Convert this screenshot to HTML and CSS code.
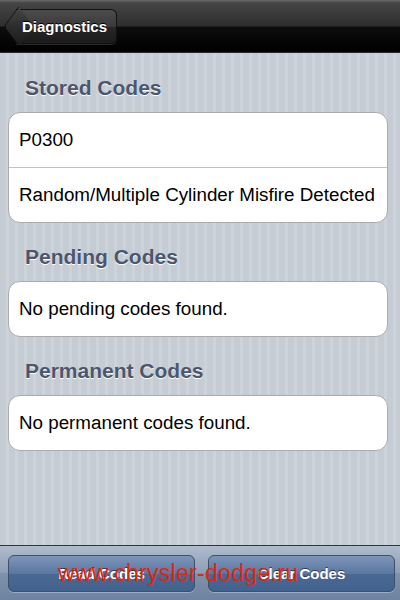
FILE: index.html
```html
<!DOCTYPE html>
<html lang="en">
<head>
  <meta charset="UTF-8">
  <meta name="viewport" content="width=device-width, initial-scale=1.0">
  <title>Diagnostics</title>
  <link rel="stylesheet" href="styles.css">
</head>
<body>
  <div class="app">
    <div class="navbar">
      <button class="back">Diagnostics</button>
    </div>
    <div class="content">
      <h2 class="section-title">Stored Codes</h2>
      <div class="group">
        <div class="cell">P0300</div>
        <div class="cell">Random/Multiple Cylinder Misfire Detected</div>
      </div>
      <h2 class="section-title">Pending Codes</h2>
      <div class="group">
        <div class="cell">No pending codes found.</div>
      </div>
      <h2 class="section-title">Permanent Codes</h2>
      <div class="group">
        <div class="cell">No permanent codes found.</div>
      </div>
    </div>
    <div class="toolbar">
      <button class="tool-btn">Read Codes</button>
      <button class="tool-btn">Clear Codes</button>
      <span class="watermark">www.chrysler-dodge.ru</span>
    </div>
  </div>
</body>
</html>
```

FILE: styles.css
```css
body {
  margin: 0;
  font-family: "Liberation Sans", Arial, sans-serif;
}
.app {
  width: 400px;
  height: 600px;
  display: flex;
  flex-direction: column;
  background: repeating-linear-gradient(90deg, #c5ccd4 0, #c5ccd4 6px, #ccd3da 6px, #ccd3da 9px);
}
.navbar {
  height: 53px;
  box-sizing: border-box;
  display: flex;
  align-items: center;
  padding-left: 6px;
  background: linear-gradient(#6a6a6a 0, #454545 3px, #2e2e2e 26px, #0d0d0d 27px, #000 52px);
  border-bottom: 1px solid #2a2a2a;
}
.back {
  position: relative;
  z-index: 0;
  isolation: isolate;
  height: 35px;
  margin-left: 10px;
  padding: 0 9px 0 6px;
  font-family: inherit;
  font-size: 15px;
  font-weight: bold;
  color: #fff;
  text-shadow: 0 -1px 0 #000;
  border: 1px solid #111;
  border-left: none;
  border-radius: 0 6px 6px 0;
  background: linear-gradient(#4c4c4c, #3a3a3a 50%, #262626 51%, #1c1c1c);
  box-shadow: 0 1px 0 rgba(255, 255, 255, 0.15);
}
.back::before {
  content: "";
  position: absolute;
  left: -10px;
  top: 4px;
  width: 24px;
  height: 24px;
  transform: rotate(45deg) skew(8deg, 8deg);
  background: linear-gradient(135deg, #474747, #2c2c2c 50%, #1c1c1c);
  border-left: 1px solid #111;
  border-bottom: 1px solid #111;
  border-radius: 0 0 0 4px;
  z-index: -1;
}
.content {
  flex: 1;
  padding: 24px 12px 0 8px;
}
.section-title {
  margin: 0 0 13px 17px;
  font-size: 21px;
  font-weight: bold;
  color: #4c566c;
  text-shadow: 0 1px 0 #fff;
  line-height: 22px;
}
.group {
  background: #fff;
  border: 1px solid #a9abae;
  border-radius: 12px;
  margin-bottom: 23px;
}
.cell {
  height: 54px;
  display: flex;
  align-items: center;
  padding-left: 10px;
  font-size: 18.8px;
  color: #000;
}
.cell + .cell {
  border-top: 1px solid #c2c2c2;
}
.toolbar {
  position: relative;
  height: 55px;
  box-sizing: border-box;
  border-top: 1px solid #2d3642;
  display: flex;
  gap: 13px;
  padding: 9px 5px 8px 8px;
  background: linear-gradient(#b0bccd, #8c9db5 50%, #7f92ab 51%, #6d83a1);
}
.tool-btn {
  flex: 1;
  font-family: inherit;
  font-size: 15px;
  font-weight: bold;
  color: #fff;
  text-shadow: 0 -1px 0 #2b3d56;
  border: 1px solid #3d4f69;
  border-radius: 6px;
  background: linear-gradient(#7d95b8, #5b77a1 50%, #4a6892 51%, #42628f);
  box-shadow: 0 1px 0 rgba(255, 255, 255, 0.3);
}
.watermark {
  position: absolute;
  left: 58px;
  top: 14px;
  font-size: 23px;
  color: #e0260e;
  letter-spacing: 0.3px;
}
```
